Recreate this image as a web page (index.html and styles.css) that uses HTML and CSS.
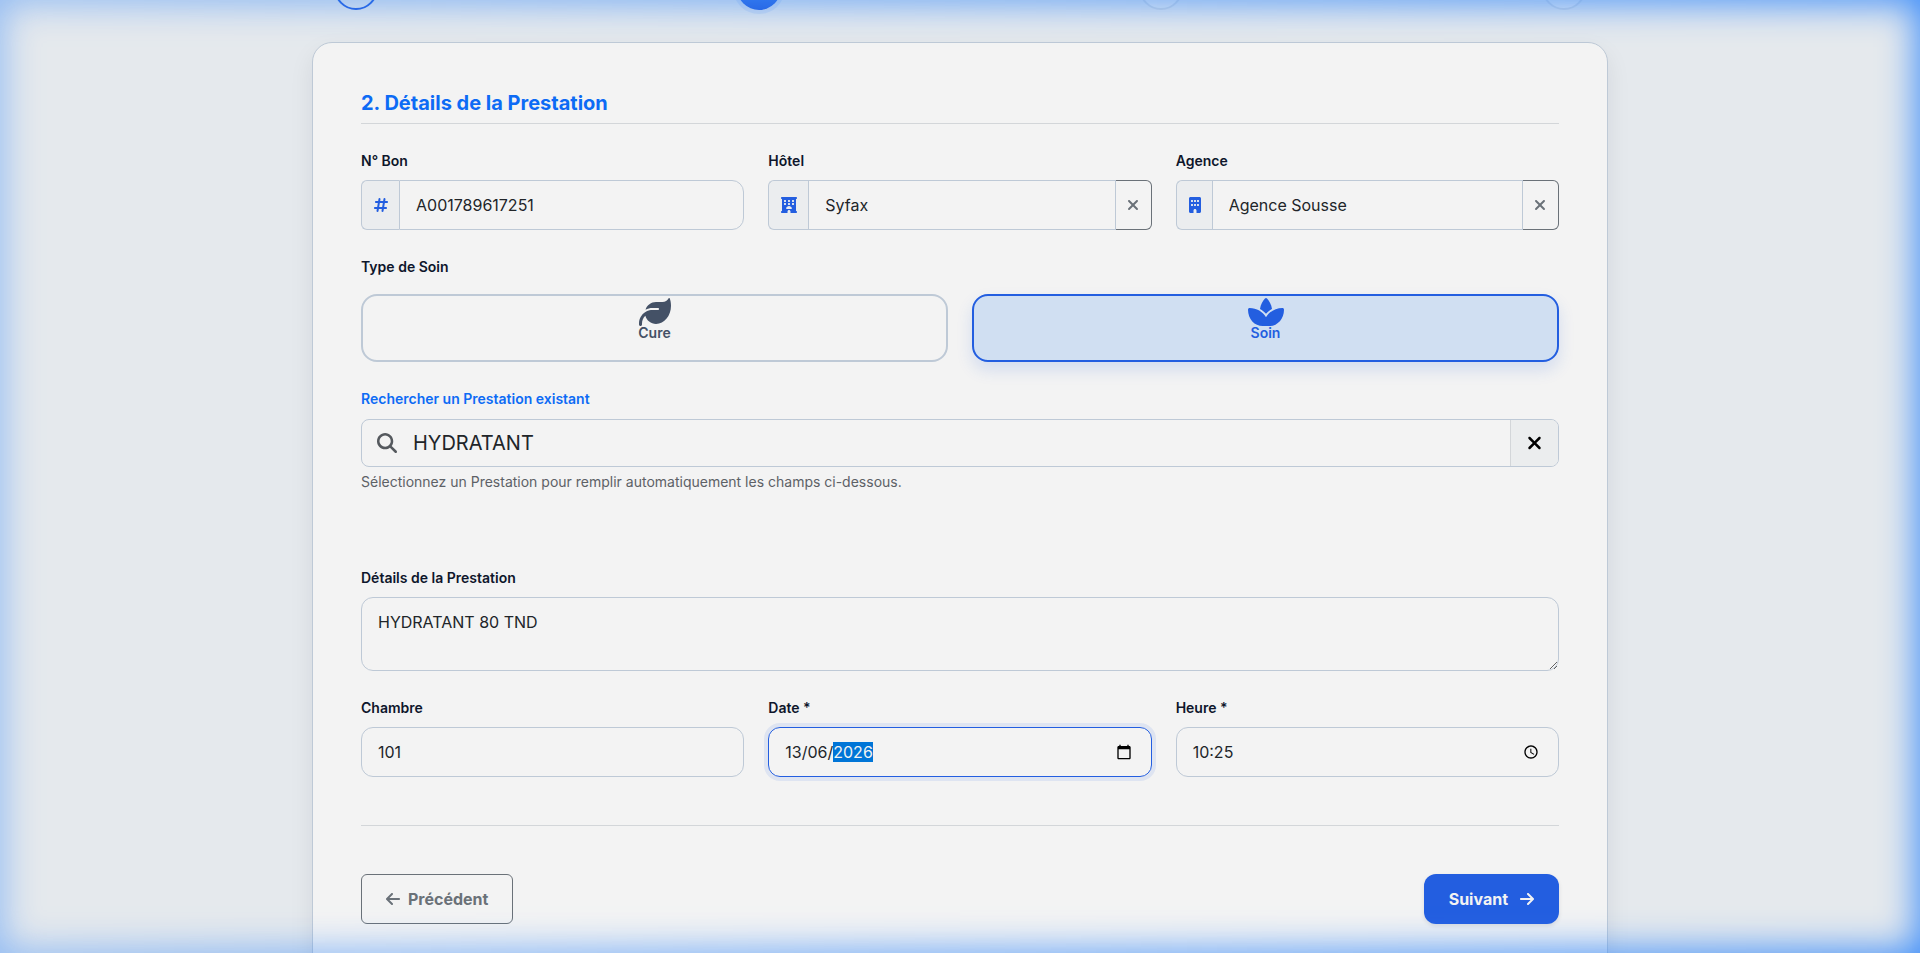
FILE: index.html
```html
<!DOCTYPE html>
<html lang="fr">
<head>
<meta charset="utf-8">
<title>Détails de la Prestation</title>
<link rel="stylesheet" href="styles.css">
</head>
<body>
<svg class="sprite" aria-hidden="true">
  <symbol id="i-xmark" viewBox="0 0 384 512"><path d="M342.6 150.6c12.5-12.5 12.5-32.8 0-45.3s-32.8-12.5-45.3 0L192 210.7 86.6 105.4c-12.5-12.5-32.8-12.5-45.3 0s-12.5 32.8 0 45.3L146.7 256 41.4 361.4c-12.5 12.5-12.5 32.8 0 45.3s32.8 12.5 45.3 0L192 301.3 297.4 406.6c12.5 12.5 32.8 12.5 45.3 0s12.5-32.8 0-45.3L237.3 256 342.6 150.6z"/></symbol>
</svg>
<div class="page">
  <ol class="stepper">
    <li class="step step-done"></li>
    <li class="step step-active"></li>
    <li class="step"></li>
    <li class="step"></li>
  </ol>

  <form class="card">
    <h2 class="card-title">2. Détails de la Prestation</h2>

    <div class="row">
      <div class="field">
        <label class="label" for="bon">N° Bon</label>
        <div class="group">
          <span class="addon"><svg class="icon" viewBox="0 0 448 512" width="14" height="16"><path d="M181.3 32.4c17.4 2.9 29.2 19.4 26.3 36.8L197.8 128l95.1 0 11.5-69.3c2.9-17.4 19.4-29.2 36.8-26.3s29.2 19.4 26.3 36.8L357.8 128l58.2 0c17.7 0 32 14.3 32 32s-14.3 32-32 32l-68.9 0L325.8 320l58.2 0c17.7 0 32 14.3 32 32s-14.3 32-32 32l-68.9 0-11.5 69.3c-2.9 17.4-19.4 29.2-36.8 26.3s-29.2-19.4-26.3-36.8l9.8-58.7-95.1 0-11.5 69.3c-2.9 17.4-19.4 29.2-36.8 26.3s-29.2-19.4-26.3-36.8L90.2 384 32 384c-17.7 0-32-14.3-32-32s14.3-32 32-32l68.9 0 21.3-128L64 192c-17.7 0-32-14.3-32-32s14.3-32 32-32l68.9 0 11.5-69.3c2.9-17.4 19.4-29.2 36.8-26.3zM187.1 192L165.8 320l95.1 0 21.3-128-95.1 0z"/></svg></span>
          <input class="control control-last" id="bon" type="text" value="A001789617251">
        </div>
      </div>
      <div class="field">
        <label class="label" for="hotel">Hôtel</label>
        <div class="group">
          <span class="addon"><svg class="icon" viewBox="0 0 512 512" width="16" height="16"><path fill-rule="evenodd" d="M0 32C0 14 14 0 32 0H480c18 0 32 14 32 32s-14 32-32 32V448c18 0 32 14 32 32s-14 32-32 32H304V464c0-26-22-48-48-48s-48 22-48 48v48H32c-18 0-32-14-32-32s14-32 32-32V64C14 64 0 50 0 32zM112 96c-9 0-16 7-16 16v32c0 9 7 16 16 16h32c9 0 16-7 16-16V112c0-9-7-16-16-16zM240 96c-9 0-16 7-16 16v32c0 9 7 16 16 16h32c9 0 16-7 16-16V112c0-9-7-16-16-16zM368 96c-9 0-16 7-16 16v32c0 9 7 16 16 16h32c9 0 16-7 16-16V112c0-9-7-16-16-16zM112 192c-9 0-16 7-16 16v32c0 9 7 16 16 16h32c9 0 16-7 16-16V208c0-9-7-16-16-16zM240 192c-9 0-16 7-16 16v32c0 9 7 16 16 16h32c9 0 16-7 16-16V208c0-9-7-16-16-16zM368 192c-9 0-16 7-16 16v32c0 9 7 16 16 16h32c9 0 16-7 16-16V208c0-9-7-16-16-16zM328 384c13 0 24-11 21-24-11-41-48-72-93-72s-82 31-93 72c-3 13 8 24 21 24z"/></svg></span>
          <input class="control" id="hotel" type="text" value="Syfax">
          <button class="clear" type="button" aria-label="Effacer l'hôtel"><svg class="icon" width="12" height="16"><use href="#i-xmark"/></svg></button>
        </div>
      </div>
      <div class="field">
        <label class="label" for="agence">Agence</label>
        <div class="group">
          <span class="addon"><svg class="icon" viewBox="0 0 384 512" width="12" height="16"><path fill-rule="evenodd" d="M48 0C21 0 0 21 0 48V464c0 27 21 48 48 48h96V432c0-26 22-48 48-48s48 22 48 48v80h96c27 0 48-21 48-48V48c0-27-21-48-48-48zM80 96h32c9 0 16 7 16 16v32c0 9-7 16-16 16H80c-9 0-16-7-16-16V112c0-9 7-16 16-16zM176 96h32c9 0 16 7 16 16v32c0 9-7 16-16 16H176c-9 0-16-7-16-16V112c0-9 7-16 16-16zM272 96h32c9 0 16 7 16 16v32c0 9-7 16-16 16H272c-9 0-16-7-16-16V112c0-9 7-16 16-16zM80 224h32c9 0 16 7 16 16v32c0 9-7 16-16 16H80c-9 0-16-7-16-16V240c0-9 7-16 16-16zM176 224h32c9 0 16 7 16 16v32c0 9-7 16-16 16H176c-9 0-16-7-16-16V240c0-9 7-16 16-16zM272 224h32c9 0 16 7 16 16v32c0 9-7 16-16 16H272c-9 0-16-7-16-16V240c0-9 7-16 16-16z"/></svg></span>
          <input class="control" id="agence" type="text" value="Agence Sousse">
          <button class="clear" type="button" aria-label="Effacer l'agence"><svg class="icon" width="12" height="16"><use href="#i-xmark"/></svg></button>
        </div>
      </div>
    </div>

    <fieldset class="types">
      <legend class="label">Type de Soin</legend>
      <div class="row">
        <label class="tile">
          <input class="tile-radio" type="radio" name="type" value="cure">
          <svg class="icon" viewBox="0 32 512 448" width="32" height="28"><path d="M272 96c-78.6 0-145.1 51.5-167.7 122.5c33.6-17 71.5-26.5 111.7-26.5l88 0c8.8 0 16 7.2 16 16s-7.2 16-16 16l-16 0-72 0c-16.6 0-32.7 1.9-48.3 5.4c-25.9 5.9-49.9 16.4-71.4 30.7C38.3 298.8 0 364.9 0 440l0 16c0 13.3 10.7 24 24 24s24-10.7 24-24l0-16c0-48.7 20.7-92.5 53.8-123.2C121.6 392.3 190.3 448 272 448l1 0c132.1-.7 239-130.9 239-291.4c0-42.6-7.5-83.1-21.1-119.6c-2.6-6.9-12.7-6.6-16.2-.1C455.9 72.1 418.7 96 376 96L272 96z"/></svg>
          <span>Cure</span>
        </label>
        <label class="tile">
          <input class="tile-radio" type="radio" name="type" value="soin" checked>
          <svg class="icon" viewBox="0 32 576 448" width="36" height="28"><path d="M288 32c-6 0-12 3-16 8-36 42-70 97-80 166 38 20 71 46 96 78 25-32 58-58 96-78-10-69-44-124-80-166-4-5-10-8-16-8zM288 340C240 254 136 192 26 192c-15 0-26 11-26 26C0 366 106 480 236 480h104c130 0 236-114 236-262 0-15-11-26-26-26-110 0-214 62-262 148z"/></svg>
          <span>Soin</span>
        </label>
      </div>
    </fieldset>

    <div class="field search">
      <label class="label label-link" for="search">Rechercher un Prestation existant</label>
      <div class="search-box">
        <svg class="icon search-icon" viewBox="0 0 512 512" width="20" height="20"><path d="M416 208c0 45.9-14.9 88.3-40 122.7L502.6 457.4c12.5 12.5 12.5 32.8 0 45.3s-32.8 12.5-45.3 0L330.7 376c-34.4 25.2-76.8 40-122.7 40C93.1 416 0 322.9 0 208S93.1 0 208 0S416 93.1 416 208zM208 352a144 144 0 1 0 0-288 144 144 0 1 0 0 288z"/></svg>
        <input class="search-input" id="search" type="text" value="HYDRATANT">
        <button class="search-clear" type="button" aria-label="Effacer la recherche"><svg class="icon" width="15" height="20"><use href="#i-xmark"/></svg></button>
      </div>
      <p class="help">Sélectionnez un Prestation pour remplir automatiquement les champs ci-dessous.</p>
    </div>

    <div class="field details">
      <label class="label" for="details">Détails de la Prestation</label>
      <textarea class="control" id="details" rows="2">HYDRATANT 80 TND</textarea>
    </div>

    <div class="row">
      <div class="field">
        <label class="label" for="chambre">Chambre</label>
        <input class="control" id="chambre" type="text" value="101">
      </div>
      <div class="field">
        <label class="label" for="date">Date *</label>
        <div class="picker">
          <input class="control" id="date" type="text" value="13/06/2026">
          <svg class="picker-icon" viewBox="0 0 24 24" width="16" height="16" aria-hidden="true"><path d="M20 3h-1V1h-2v2H7V1H5v2H4c-1.100 0-2 .9-2 2v16c0 1.100.9 2 2 2h16c1.100 0 2-.9 2-2V5c0-1.100-.9-2-2-2zm0 18H4V8h16v13z"/></svg>
        </div>
      </div>
      <div class="field">
        <label class="label" for="heure">Heure *</label>
        <div class="picker">
          <input class="control" id="heure" type="text" value="10:25">
          <svg class="picker-icon" viewBox="0 0 24 24" width="16" height="16" aria-hidden="true"><path d="M12 2C6.500 2 2 6.500 2 12s4.500 10 10 10 10-4.500 10-10S17.500 2 12 2zm0 18c-4.400 0-8-3.600-8-8s3.600-8 8-8 8 3.600 8 8-3.600 8-8 8zm.5-13H11v6l5.200 3.200.8-1.300-4.500-2.700V7z"/></svg>
        </div>
      </div>
    </div>

    <div class="actions">
      <button class="btn btn-outline" type="button"><svg class="icon" viewBox="0 0 448 512" width="14" height="16"><path d="M9.400 233.400c-12.500 12.500-12.500 32.800 0 45.300l160 160c12.500 12.500 32.800 12.500 45.300 0s12.500-32.800 0-45.300L109.200 288 416 288c17.700 0 32-14.300 32-32s-14.300-32-32-32l-306.700 0L214.600 118.600c12.500-12.500 12.500-32.800 0-45.300s-32.800-12.500-45.300 0l-160 160z"/></svg>Précédent</button>
      <button class="btn btn-primary" type="button">Suivant<svg class="icon" viewBox="0 0 448 512" width="14" height="16"><path d="M438.600 278.600c12.500-12.500 12.500-32.800 0-45.300l-160-160c-12.500-12.500-32.800-12.500-45.300 0s-12.500 32.800 0 45.300L338.800 224 32 224c-17.700 0-32 14.300-32 32s14.300 32 32 32l306.700 0L233.400 393.400c-12.500 12.500-12.500 32.800 0 45.300s32.800 12.500 45.300 0l160-160z"/></svg></button>
    </div>
  </form>
</div>
<div class="glow" aria-hidden="true"></div>
<script src="main.js"></script>
</body>
</html>
```
FILE: styles.css
```css
:root {
  --surface: #f3f3f3;
  --page: #e5e9ed;
  --line: #bec9d6;
  --rule: #d3d6d9;
  --ink: #0e162b;
  --text: #212529;
  --muted: #6a7178;
  --blue: #235ee0;
  --link: #0d6bf5;
}

* {
  box-sizing: border-box;
}

html {
  overflow: hidden;
}

body {
  margin: 0;
  background: var(--page);
  color: var(--text);
  font: 16px/24px Inter, "Noto Sans", sans-serif;
}

button,
input,
textarea {
  font: inherit;
  color: inherit;
}

.sprite {
  position: absolute;
  width: 0;
  height: 0;
}

.icon {
  display: block;
  flex: none;
  fill: currentColor;
}

.page {
  max-width: 1320px;
  margin: -34px auto 0;
  padding: 0 12px;
}

.stepper {
  display: flex;
  justify-content: space-between;
  margin: 0 0 32px;
  padding: 0 22px;
  list-style: none;
}

.step {
  width: 44px;
  height: 44px;
  border: 2px solid var(--line);
  border-radius: 50%;
  background: var(--surface);
  opacity: 0.5;
}

.step-done {
  border-color: var(--blue);
  background: transparent;
  opacity: 1;
}

.step-active {
  border: 0;
  background: linear-gradient(#3b82f6, var(--blue));
  box-shadow: 0 0 0 4px rgba(59, 130, 246, 0.12);
  opacity: 1;
}

.card {
  padding: 48px;
  border: 1px solid var(--line);
  border-radius: 20px;
  background: var(--surface);
  box-shadow: 0 10px 24px rgba(15, 23, 42, 0.08);
}

.card-title {
  margin: 0 0 26px;
  padding-bottom: 8px;
  border-bottom: 1px solid var(--rule);
  color: var(--link);
  font-size: 20px;
  font-weight: 700;
  line-height: 24px;
}

.row {
  display: flex;
  gap: 24px;
}

.row > * {
  flex: 1 1 0;
  min-width: 0;
}

.label {
  display: block;
  margin-bottom: 8px;
  padding: 0;
  color: var(--ink);
  font-size: 14px;
  font-weight: 600;
  line-height: 22px;
}

.label-link {
  color: var(--link);
}

.control {
  display: block;
  width: 100%;
  height: 50px;
  padding: 12px 16px;
  border: 1px solid var(--line);
  border-radius: 12px;
  background: transparent;
  outline: 0;
}

.control:focus {
  border-color: var(--blue);
  box-shadow: 0 0 0 4px rgba(35, 94, 224, 0.1);
}

.control::selection {
  background: #0075d7;
  color: #f3f3f3;
}

textarea.control {
  height: 74px;
}

.group {
  display: flex;
}

.group .control {
  flex: 1;
  width: auto;
  min-width: 0;
  border-radius: 0;
}

.group .control-last {
  border-radius: 0 12px 12px 0;
}

.addon {
  display: flex;
  align-items: center;
  padding: 0 11px 0 12px;
  border: 1px solid var(--line);
  border-right: 0;
  border-radius: 6px 0 0 6px;
  background: #ebedef;
  color: var(--blue);
}

.clear {
  padding: 0 12px 0 11px;
  border: 1px solid var(--muted);
  border-left: 0;
  border-radius: 0 6px 6px 0;
  background: transparent;
  color: var(--muted);
}

.types {
  margin: 26px 0;
  padding: 0;
  border: 0;
}

.types > .label {
  margin-bottom: 16px;
}

.tile {
  position: relative;
  display: flex;
  flex-direction: column;
  align-items: center;
  min-height: 68px;
  padding: 2px 16px 20px;
  border: 2px solid var(--line);
  border-radius: 16px;
  color: #445166;
  font-size: 14px;
  font-weight: 600;
  line-height: 14px;
}

.tile:has(:checked) {
  border-color: var(--blue);
  background: #d0dff2;
  box-shadow: 0 8px 16px rgba(35, 94, 224, 0.15);
  color: var(--blue);
}

.tile-radio {
  position: absolute;
  margin: 0;
  opacity: 0;
}

.search .label {
  margin-bottom: 9px;
}

.search-box {
  display: flex;
  align-items: stretch;
  height: 48px;
  border: 1px solid var(--line);
  border-radius: 8px;
  overflow: hidden;
}

.search-icon {
  align-self: center;
  margin: 0 16px 0 15px;
  color: #55595e;
}

.search-input {
  flex: 1;
  min-width: 0;
  padding: 0;
  border: 0;
  background: transparent;
  outline: 0;
  font-size: 20px;
}

.search-clear {
  padding: 0 16px;
  border: 0;
  border-left: 1px solid var(--rule);
  background: #ebedee;
  color: #000;
}

.help {
  margin: 5px 0 0;
  color: #5d6166;
  font-size: 14px;
  line-height: 20px;
}

.details {
  margin: 75px 0 26px;
}

.picker {
  position: relative;
}

.picker-icon {
  position: absolute;
  top: 17px;
  right: 20px;
}

.actions {
  display: flex;
  justify-content: space-between;
  margin-top: 48px;
  padding-top: 48px;
  border-top: 1px solid var(--rule);
}

.btn {
  display: flex;
  align-items: center;
  height: 50px;
  padding: 0 24px;
  border: 1px solid transparent;
  font-weight: 700;
}

.btn-outline {
  gap: 8px;
  border-color: var(--muted);
  border-radius: 6px;
  background: transparent;
  color: var(--muted);
}

.btn-primary {
  gap: 12px;
  border-radius: 12px;
  background: var(--blue);
  box-shadow: 0 2px 4px rgba(15, 23, 42, 0.1);
  color: #f3f3f3;
}

.glow {
  position: fixed;
  inset: 0;
  box-shadow: inset 0 0 36px 3px rgba(59, 140, 250, 1);
  mask-image: linear-gradient(to right, rgba(0, 0, 0, 0.5), #000);
  pointer-events: none;
}
```
FILE: main.js
```js
// The year segment of the date is the one being edited.
const date = document.getElementById('date');
date.focus({ preventScroll: true });
date.setSelectionRange(6, 10);
```
